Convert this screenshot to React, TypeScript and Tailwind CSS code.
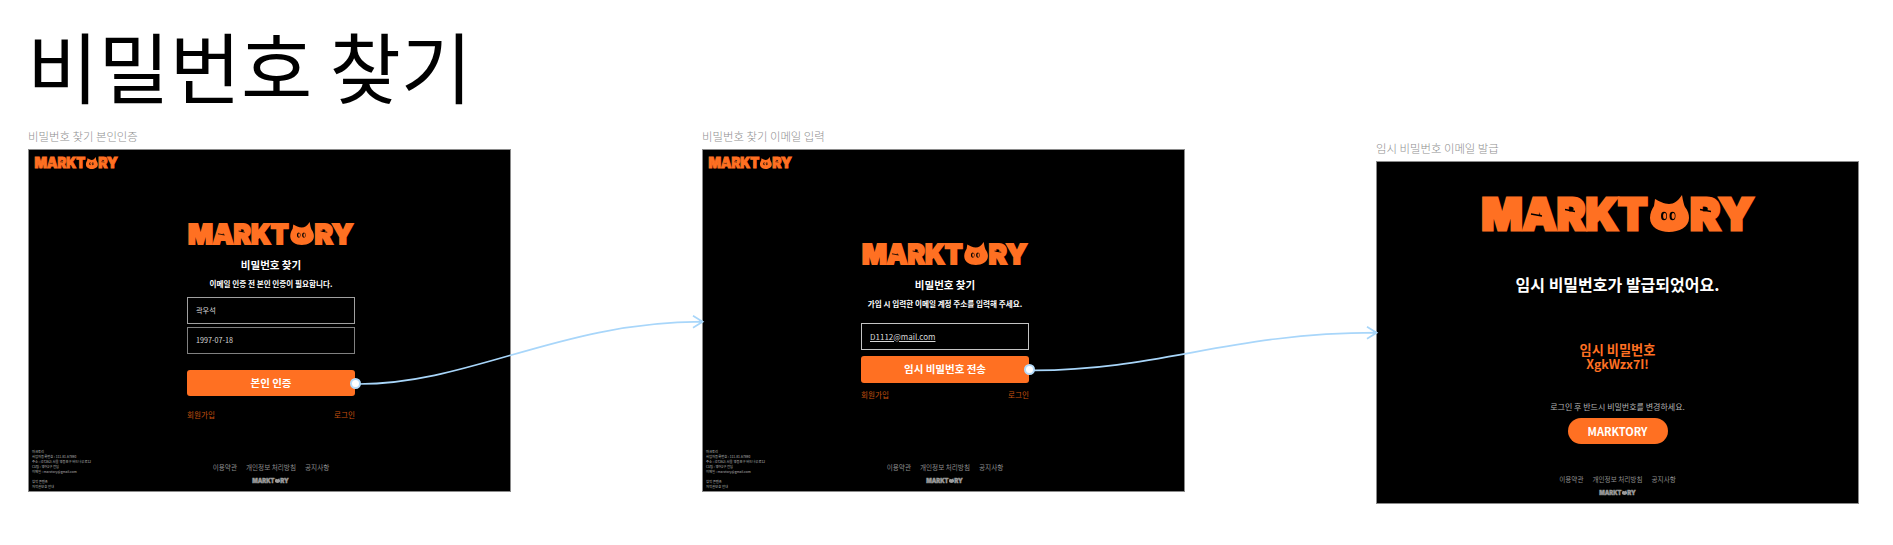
import React from 'react';

function Logo({ className, fill = '#ff7022', detail = true }: { className: string; fill?: string; detail?: boolean }) {
  return (
    <svg viewBox="0 0 275 37" className={`overflow-visible ${className}`} preserveAspectRatio="none">
      <g fontFamily="Inter" fontWeight="900" fontSize="44" fill={fill} stroke={fill} strokeWidth="3">
        <text x="1.5" y="35" textLength="166" lengthAdjust="spacingAndGlyphs">
          MARKT
        </text>
        <text x="210" y="35" textLength="64" lengthAdjust="spacingAndGlyphs">
          RY
        </text>
      </g>
      <path
        d="M175 4C179 6 184 9 189 9C194 9 198 6 202 0C203 6 204 10 205 12C208 16 209 19 209 23C209 32 199 37 189 37C179 37 170 32 170 23C170 18 172 14 174 11Z"
        fill={fill}
      />
      {detail && (
        <g>
          <ellipse cx="184" cy="21" rx="3" ry="4.2" fill="#000" />
          <ellipse cx="192.5" cy="21" rx="3" ry="4.2" fill="#000" />
          <ellipse cx="184.7" cy="21" rx="1.6" ry="3" fill={fill} />
          <ellipse cx="193.2" cy="21" rx="1.6" ry="3" fill={fill} />
          <path d="M51 19L62 21M85 14.5L95 16.5M220 14.5L231 16.5" stroke="#000" strokeWidth="1.3" />
        </g>
      )}
    </svg>
  );
}

function FooterLinks() {
  return (
    <div className="flex flex-col items-center pb-[8px]">
      <div className="flex gap-[9px] text-[6.6px] leading-[10px] text-[#8f8f8f]">
        <span>이용약관</span>
        <span>개인정보 처리방침</span>
        <span>공지사항</span>
      </div>
      <Logo className="mt-[6px] h-[5px] w-[37px]" fill="#9a9a9a" detail={false} />
    </div>
  );
}

function Footer() {
  return (
    <div className="mt-auto grid grid-cols-[1fr_auto_1fr] items-end pl-[3px]">
      <div className="pb-[2px] text-[3.3px] leading-[5px] text-[#b8b8b8]">
        <p>마크토리</p>
        <p>사업자등록번호 : 111-81-67890</p>
        <p>주소 : (07262) 서울 영등포구 버드나루로12</p>
        <p>CS팀 : 영어2구 전담</p>
        <p className="mb-[5px]">이메일 : marxtory@gmail.com</p>
        <p>창작 콘텐츠</p>
        <p>저작권보호 안내</p>
      </div>
      <FooterLinks />
      <div />
    </div>
  );
}

function Links() {
  return (
    <div className="flex justify-between text-[7.6px] leading-[10px] text-[#c4500f]">
      <span>회원가입</span>
      <span>로그인</span>
    </div>
  );
}

function Field({ value, underline, tone }: { value: string; underline?: boolean; tone: string }) {
  return (
    <div className={`flex h-[27px] items-center border pl-[8px] text-[7.2px] text-[#d8d8d8] ${tone}`}>
      <span className={underline ? 'text-[8px] underline' : ''}>{value}</span>
    </div>
  );
}

function OrangeButton({ label }: { label: string }) {
  return (
    <div className="relative flex h-[26.5px] items-center justify-center rounded-[3px] bg-[#ff7022] text-[10.5px] font-bold text-white">
      {label}
      <span className="absolute right-[-5.5px] top-[8px] h-[11px] w-[11px] rounded-full border-2 border-[#b5dcfb] bg-white" />
    </div>
  );
}

function SmallFrame({ children }: { children: React.ReactNode }) {
  return (
    <div className="flex h-[343px] w-[483px] flex-col border border-[#8a8a8a] bg-black">
      <Logo className="ml-[5px] mt-[7px] h-[12px] w-[84px] shrink-0" />
      {children}
      <Footer />
    </div>
  );
}

export default function App() {
  return (
    <div className="relative h-[545px] w-[1893px] overflow-hidden bg-white font-['Noto_Sans_CJK_KR','Noto_Sans',sans-serif] text-black">
      <h1 className="ml-[27px] pt-[12px] text-[77.5px] font-normal leading-[104px]">비밀번호 찾기</h1>

      <div className="ml-[28px] mt-[11px] flex gap-[191px]">
        <section>
          <p className="mb-[4px] text-[11.4px] font-light leading-[18px] text-[#8f8f8f]">비밀번호 찾기 본인인증</p>
          <SmallFrame>
            <div className="ml-[158px] mt-[53px] w-[168px]">
              <Logo className="h-[23px] w-[167px]" />
              <h2 className="mt-[12px] text-center text-[10.5px] font-bold leading-[16px] text-white">비밀번호 찾기</h2>
              <p className="mt-[5px] text-center text-[7.6px] font-bold leading-[12px] text-white">이메일 인증 전 본인 인증이 필요합니다.</p>
              <div className="mt-[7px] flex flex-col gap-[3px]">
                <Field value="곽우석" tone="border-[#a0a0a0]" />
                <Field value="1997-07-18" tone="border-[#808080]" />
              </div>
              <div className="mt-[15.5px]">
                <OrangeButton label="본인 인증" />
              </div>
              <div className="mt-[14px]">
                <Links />
              </div>
            </div>
          </SmallFrame>
        </section>

        <section>
          <p className="mb-[4px] text-[11.4px] font-light leading-[18px] text-[#8f8f8f]">비밀번호 찾기 이메일 입력</p>
          <SmallFrame>
            <div className="ml-[158px] mt-[73px] w-[168px]">
              <Logo className="h-[23px] w-[167px]" />
              <h2 className="mt-[12px] text-center text-[10.5px] font-bold leading-[16px] text-white">비밀번호 찾기</h2>
              <p className="mt-[5px] text-center text-[7.6px] font-bold leading-[12px] text-white">가입 시 입력한 이메일 계정 주소를 입력해 주세요.</p>
              <div className="mt-[13px]">
                <Field value="D1112@mail.com" underline tone="border-[#c4c4c4]" />
              </div>
              <div className="mt-[6px]">
                <OrangeButton label="임시 비밀번호 전송" />
              </div>
              <div className="mt-[7px]">
                <Links />
              </div>
            </div>
          </SmallFrame>
        </section>

        <section className="mt-[12px]">
          <p className="mb-[4px] text-[11.4px] font-light leading-[18px] text-[#8f8f8f]">임시 비밀번호 이메일 발급</p>
          <div className="flex h-[343px] w-[483px] flex-col items-center border border-[#8a8a8a] bg-black">
            <Logo className="mt-[33px] h-[37px] w-[275px]" />
            <h2 className="mt-[40px] text-[16px] font-bold leading-[24px] text-white">임시 비밀번호가 발급되었어요.</h2>
            <p className="mt-[46px] text-[13.2px] font-bold leading-[15px] text-[#ff7022]">임시 비밀번호</p>
            <p className="text-[12.3px] font-bold leading-[15px] text-[#ff7022]">XgkWzx7I!</p>
            <p className="mt-[29px] text-[8px] leading-[12px] text-[#b4b4b4]">로그인 후 반드시 비밀번호를 변경하세요.</p>
            <div className="mt-[5px] flex h-[26px] w-[100px] items-center justify-center rounded-full bg-[#ff7022] text-[11px] font-bold text-white">
              MARKTORY
            </div>
            <div className="mt-auto">
              <FooterLinks />
            </div>
          </div>
        </section>
      </div>

      {/* connector arrows between frames */}
      <svg className="pointer-events-none absolute left-0 top-0 h-[545px] w-[1893px]" fill="none" stroke="#a8d6fa" strokeWidth="1.7">
        <path d="M359 384C470 384 560 321.7 702.7 321.7M693 315.7L702.7 321.7L693 327.7" />
        <path d="M1034 370.3C1160 370.3 1230 332.7 1376.7 332.7M1367 326.7L1376.7 332.7L1367 338.7" />
      </svg>
    </div>
  );
}
